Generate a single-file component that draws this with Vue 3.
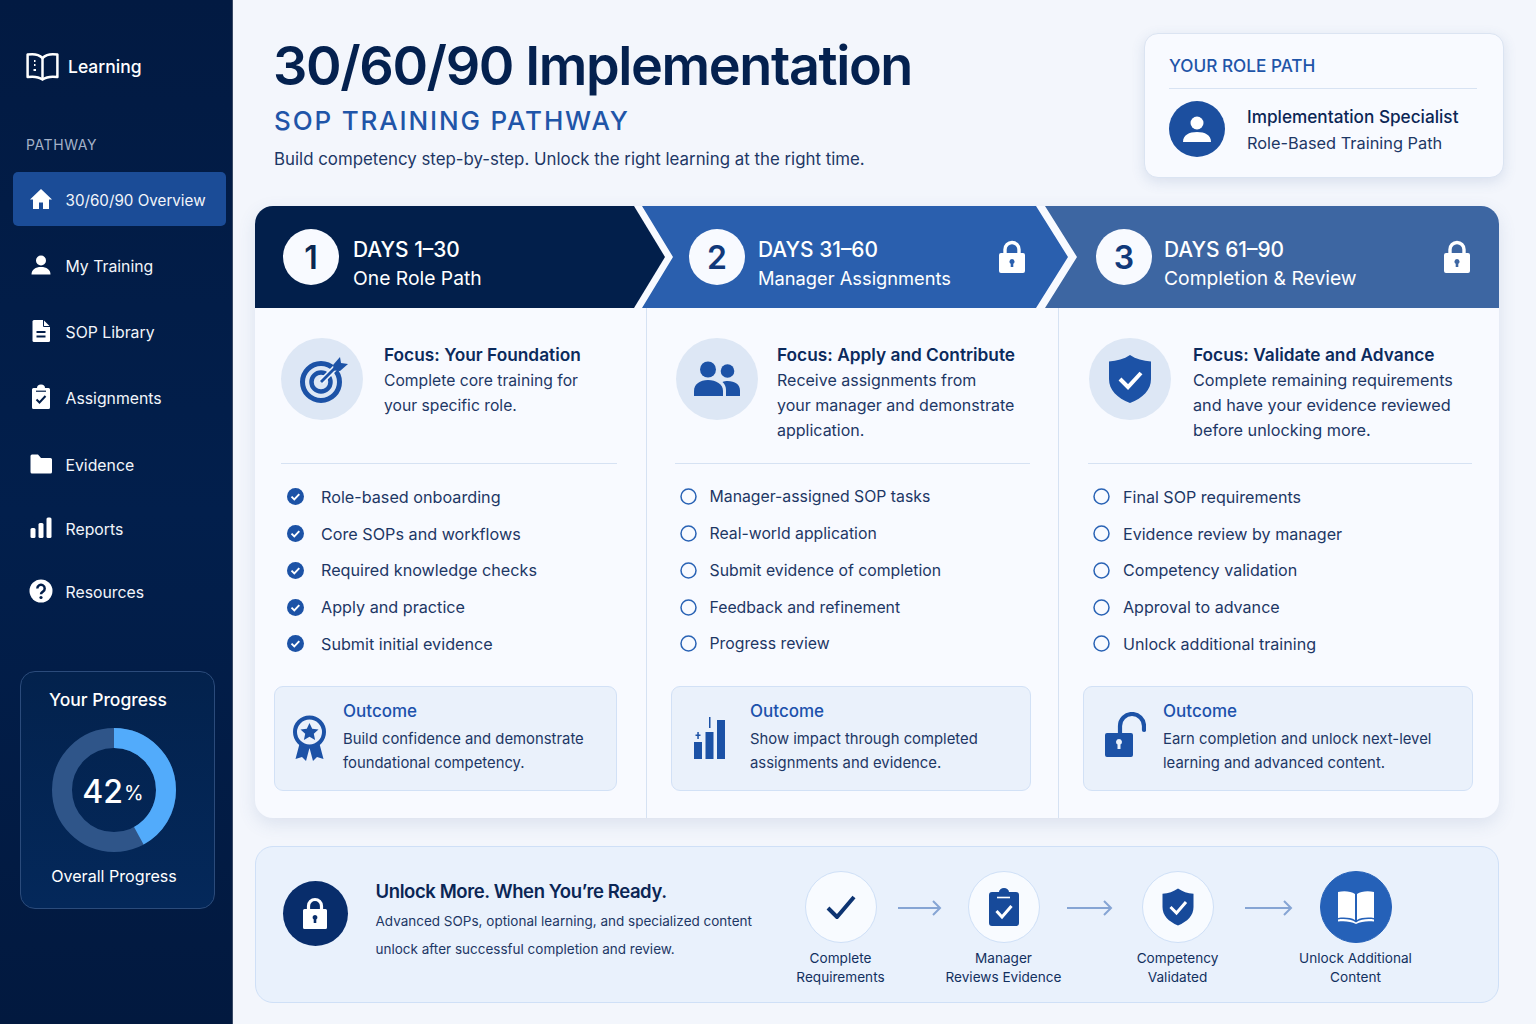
<template>
  <div class="page">
    <aside class="sidebar">
      <div class="brand">
        <svg width="33" height="29" viewBox="0 0 33 29" fill="none" stroke="#fff" stroke-width="2.5" stroke-linejoin="round">
          <path d="M16.500 6C13 2.600 7 1.600 1.600 2.600V25c5.400-.8 11.400 0 14.900 2.600C20 25 26 24.200 31.400 25V2.600C26 1.600 20 2.600 16.500 6Z" />
          <path d="M16.500 6v21" />
          <path d="M8 9h1.500M8 13h1.500M7.500 18h2.500" stroke-width="1.800" />
        </svg>
        <span>Learning</span>
      </div>
      <div class="nav-label">PATHWAY</div>
      <nav class="nav">
        <a class="nav-item active">
          <span class="nav-icon">
            <svg width="24" height="24" viewBox="0 0 24 24" fill="#fff"><path d="M12 2 1 12.500h3V22h6v-6.500h4V22h6v-9.500h3L12 2Z" /></svg>
          </span>
          30/60/90 Overview
        </a>
        <a class="nav-item">
          <span class="nav-icon">
            <svg width="24" height="24" viewBox="0 0 24 24" fill="#fff"><circle cx="12" cy="7.500" r="5" /><path d="M2.500 21.500c0-5 4-7.500 9.500-7.500s9.500 2.500 9.500 7.500Z" /></svg>
          </span>
          My Training
        </a>
        <a class="nav-item">
          <span class="nav-icon">
            <svg width="24" height="24" viewBox="0 0 24 24" fill="#fff"><path d="M3.500 2.500A1.500 1.500 0 0 1 5 1h9.500l6.500 6.500v14a1.500 1.500 0 0 1-1.500 1.500H5a1.500 1.500 0 0 1-1.500-1.500Z" /><path d="M7.500 13h9M7.500 17.500h9" stroke="#031e49" stroke-width="1.800" /><path d="M14.500 1v6.500H21" fill="none" stroke="#031e49" stroke-width="1" /></svg>
          </span>
          SOP Library
        </a>
        <a class="nav-item">
          <span class="nav-icon">
            <svg width="24" height="26" viewBox="0 0 24 26" fill="#fff"><path d="M3 5.500A1.500 1.500 0 0 1 4.500 4H8a4 3.500 0 0 1 8 0h3.500A1.500 1.500 0 0 1 21 5.500v18a1.500 1.500 0 0 1-1.500 1.500h-15A1.500 1.500 0 0 1 3 23.500Z" /><path d="M7 7.200h10" stroke="#031e49" stroke-width="1.200" /><path d="m7.500 15.500 3 3 6-6.500" fill="none" stroke="#031e49" stroke-width="2" /></svg>
          </span>
          Assignments
        </a>
        <a class="nav-item">
          <span class="nav-icon">
            <svg width="24" height="24" viewBox="0 0 24 24" fill="#fff"><path d="M1.500 4A1.500 1.500 0 0 1 3 2.500h6l3 3.500h9.500A1.500 1.500 0 0 1 23 7.500V20a1.500 1.500 0 0 1-1.500 1.500H3A1.500 1.500 0 0 1 1.500 20Z" /></svg>
          </span>
          Evidence
        </a>
        <a class="nav-item">
          <span class="nav-icon">
            <svg width="24" height="24" viewBox="0 0 24 24" fill="#fff"><rect x="1.500" y="12" width="5" height="10" rx="1.500" /><rect x="9.500" y="7" width="5" height="15" rx="1.500" /><rect x="17.500" y="1.500" width="5" height="20.500" rx="1.500" /></svg>
          </span>
          Reports
        </a>
        <a class="nav-item">
          <span class="nav-icon">
            <svg width="24" height="24" viewBox="0 0 24 24"><circle cx="12" cy="12" r="11.500" fill="#fff" /><path d="M8.300 9.400a3.700 3.700 0 1 1 5.600 3.200c-1.300.8-1.900 1.300-1.900 2.700" fill="none" stroke="#031e49" stroke-width="2.500" /><circle cx="12" cy="18.500" r="1.600" fill="#031e49" /></svg>
          </span>
          Resources
        </a>
      </nav>
      <section class="progress">
        <h3>Your Progress</h3>
        <div class="ring">
          <svg width="124" height="124" viewBox="0 0 124 124">
            <circle cx="62" cy="62" r="52" fill="none" stroke="#2f5589" stroke-width="20" />
            <circle cx="62" cy="62" r="52" fill="none" stroke="#52abfb" stroke-width="20" :stroke-dasharray="ringDash" transform="rotate(-90 62 62)" />
          </svg>
          <div class="ring-value">{{ progress }}<small>%</small></div>
        </div>
        <p>Overall Progress</p>
      </section>
    </aside>

    <main class="content">
      <header class="top">
        <div class="heading">
          <h1>30/60/90 Implementation</h1>
          <h2>SOP TRAINING PATHWAY</h2>
          <p>Build competency step-by-step. Unlock the right learning at the right time.</p>
        </div>
        <div class="role-card">
          <h4>YOUR ROLE PATH</h4>
          <div class="role-row">
            <div class="avatar">
              <svg width="32" height="32" viewBox="0 0 32 32" fill="#fff"><circle cx="16" cy="10" r="6.500" /><path d="M2 29c0-7 6-10 14-10s14 3 14 10Z" /></svg>
            </div>
            <div>
              <div class="role-name">Implementation Specialist</div>
              <div class="role-sub">Role-Based Training Path</div>
            </div>
          </div>
        </div>
      </header>

      <section class="board">
        <div class="stages">
          <div v-for="s in stages" :key="s.num" class="stage" :class="'stage-' + s.num">
            <div class="stage-num">{{ s.num }}</div>
            <div class="stage-text">
              <div class="stage-days">{{ s.days }}</div>
              <div class="stage-name">{{ s.name }}</div>
            </div>
            <svg v-if="s.locked" class="stage-lock" width="28" height="35" viewBox="0 0 28 35">
              <path d="M7 15V9.500a7 7 0 0 1 14 0V15" fill="none" stroke="#fff" stroke-width="3.400" />
              <path fill="#fff" fill-rule="evenodd" d="M3 13h22a2 2 0 0 1 2 2v16a2 2 0 0 1-2 2H3a2 2 0 0 1-2-2V15a2 2 0 0 1 2-2Zm11 6a2.600 2.600 0 0 0-1.300 4.800V27h2.600v-3.200A2.600 2.600 0 0 0 14 19Z" />
            </svg>
          </div>
        </div>

        <div class="cols">
          <div v-for="c in columns" :key="c.id" class="col" :class="'col-' + c.id">
            <div class="focus">
              <div class="focus-icon">
                <svg v-if="c.id === 1" width="52" height="52" viewBox="-2 0 52 52" fill="none">
                  <circle cx="23" cy="29" r="18.500" stroke="#1c52a6" stroke-width="5" />
                  <circle cx="23" cy="29" r="9.500" stroke="#1c52a6" stroke-width="4.500" />
                  <path d="m23 29 16-16" stroke="#f0f5fc" stroke-width="6" />
                  <path d="m23 29 17-17" stroke="#1c52a6" stroke-width="2.800" />
                  <path d="m35 12 7-8 1 6 7 1-8 7-6-.500Z" fill="#1c52a6" />
                </svg>
                <svg v-else-if="c.id === 2" width="46" height="36" viewBox="0 0 46 36" fill="#1c52a6">
                  <circle cx="14" cy="8.500" r="8" />
                  <circle cx="33.500" cy="10" r="6.800" />
                  <path d="M0 35v-5c0-7 6-11 14-11s15 4 15 11v5Z" />
                  <path d="M32 35v-6c0-3-1-6-3.500-8 1.500-.7 3.500-1 5-1C41 20 46 23.500 46 29.500V35Z" />
                </svg>
                <svg v-else width="44" height="50" viewBox="0 0 44 50">
                  <path d="M22 1c6 4 13 6 21 6.500V25c0 11-8 19-21 24C9 44 1 36 1 25V7.500C9 7 16 5 22 1Z" fill="#1c52a6" />
                  <path d="m12 25 8 8 13-14" fill="none" stroke="#fff" stroke-width="4" />
                </svg>
              </div>
              <div class="focus-text">
                <h3>{{ c.focus }}</h3>
                <p v-for="line in c.lines" :key="line">{{ line }}</p>
              </div>
            </div>
            <ul class="checks">
              <li v-for="item in c.items" :key="item">
                <svg v-if="c.id === 1" width="17" height="17" viewBox="0 0 17 17">
                  <circle cx="8.500" cy="8.500" r="8.500" fill="#1c52a6" />
                  <path d="m4.500 8.700 2.800 2.800 5-5.300" fill="none" stroke="#fff" stroke-width="1.900" />
                </svg>
                <svg v-else width="17" height="17" viewBox="0 0 17 17">
                  <circle cx="8.500" cy="8.500" r="7.500" fill="none" stroke="#2a63b5" stroke-width="1.500" />
                </svg>
                <span>{{ item }}</span>
              </li>
            </ul>
            <div class="outcome">
              <div class="outcome-icon">
                <svg v-if="c.id === 1" width="33" height="46" viewBox="0 0 33 46">
                  <path d="M7 27 2.500 44l6.500-2 4 4 4-15Z" fill="#1c52a6" />
                  <path d="M26 27l4.500 17-6.500-2-4 4-4-15Z" fill="#1c52a6" />
                  <circle cx="16.500" cy="17" r="14.500" fill="#eaf1fb" stroke="#1c52a6" stroke-width="4" />
                  <path d="m16.500 8 2.700 5.800 6.300.7-4.700 4.300 1.300 6.200-5.600-3.200-5.600 3.200 1.300-6.200-4.700-4.300 6.300-.7Z" fill="#1c52a6" />
                </svg>
                <svg v-else-if="c.id === 2" width="32" height="42" viewBox="0 0 32 42" fill="#1c52a6">
                  <rect x="0" y="25" width="8" height="17" />
                  <rect x="11.500" y="15" width="8" height="27" />
                  <rect x="23" y="3" width="8" height="39" />
                  <path d="M15 0h1.500v11H15ZM3.300 15h1.500v7H3.300ZM1.500 17.500h5V19h-5Z" />
                </svg>
                <svg v-else class="lock-open" width="41" height="46" viewBox="0 0 41 46">
                  <path d="M15 22V14a12 12 0 0 1 24 0v4" fill="none" stroke="#1c52a6" stroke-width="4.200" stroke-linecap="round" />
                  <path fill="#1c52a6" fill-rule="evenodd" d="M2 21h24a2 2 0 0 1 2 2v20a2 2 0 0 1-2 2H2a2 2 0 0 1-2-2V23a2 2 0 0 1 2-2Zm12 6a3 3 0 0 0-1.500 5.600V37h3v-4.400A3 3 0 0 0 14 27Z" />
                </svg>
              </div>
              <div class="outcome-text">
                <h4>Outcome</h4>
                <p v-for="line in c.outcome" :key="line">{{ line }}</p>
              </div>
            </div>
          </div>
        </div>
      </section>

      <section class="unlock">
        <div class="unlock-lock">
          <svg width="26" height="33" viewBox="0 0 26 33">
            <path d="M6.500 14V9a6.500 6.500 0 0 1 13 0v5" fill="none" stroke="#fff" stroke-width="3.200" />
            <path fill="#fff" fill-rule="evenodd" d="M2.500 12h21A1.500 1.500 0 0 1 25 13.500v17a1.500 1.500 0 0 1-1.500 1.500h-21A1.500 1.500 0 0 1 1 30.500v-17A1.500 1.500 0 0 1 2.500 12ZM13 18a2.500 2.500 0 0 0-1.300 4.600V26h2.600v-3.400A2.500 2.500 0 0 0 13 18Z" />
          </svg>
        </div>
        <div class="unlock-text">
          <h3>Unlock More. When You’re Ready.</h3>
          <p>Advanced SOPs, optional learning, and specialized content</p>
          <p>unlock after successful completion and review.</p>
        </div>
        <div class="flow">
          <div class="flow-step step-a">
            <div class="flow-circle">
              <svg width="30" height="24" viewBox="0 0 30 24" fill="none"><path d="m2 13 9 9L28 2" stroke="#0d3472" stroke-width="4" /></svg>
            </div>
            <div class="flow-label">Complete<br />Requirements</div>
          </div>
          <svg class="arrow arrow-a" width="44" height="16" viewBox="0 0 44 16" fill="none"><path d="M0 8h42M35 1l7 7-7 7" stroke="#86a5d4" stroke-width="2" /></svg>
          <div class="flow-step step-b">
            <div class="flow-circle">
              <svg width="30" height="38" viewBox="0 0 30 38">
                <path d="M3 4h7a5 4 0 0 1 10 0h7a3 3 0 0 1 3 3v28a3 3 0 0 1-3 3H3a3 3 0 0 1-3-3V7a3 3 0 0 1 3-3Z" fill="#174a9a" />
                <path d="M8 9.500h13" stroke="#fff" stroke-width="1.600" />
                <path d="m7.500 23 5.500 6 9.500-11" fill="none" stroke="#fff" stroke-width="3" />
              </svg>
            </div>
            <div class="flow-label">Manager<br />Reviews Evidence</div>
          </div>
          <svg class="arrow arrow-b" width="46" height="16" viewBox="0 0 46 16" fill="none"><path d="M0 8h44M37 1l7 7-7 7" stroke="#86a5d4" stroke-width="2" /></svg>
          <div class="flow-step step-c">
            <div class="flow-circle">
              <svg width="32" height="38" viewBox="0 0 32 38">
                <path d="M16 .500c4.500 3.200 9.500 4.800 15.500 5.200V19c0 8.500-6 14.500-15.500 18.500C6.500 33.500.5 27.500.5 19V5.700C6.500 5.300 11.500 3.700 16 .500Z" fill="#174a9a" />
                <path d="m8.500 19 6 6 9.500-11" fill="none" stroke="#fff" stroke-width="3" />
              </svg>
            </div>
            <div class="flow-label">Competency<br />Validated</div>
          </div>
          <svg class="arrow arrow-c" width="48" height="16" viewBox="0 0 48 16" fill="none"><path d="M0 8h46M39 1l7 7-7 7" stroke="#86a5d4" stroke-width="2" /></svg>
          <div class="flow-step step-d">
            <div class="flow-circle filled">
              <svg width="38" height="34" viewBox="0 0 38 34" fill="#fff">
                <path d="M1 2c6-1.500 13-.8 17 2v26c-4-2.500-11-3-17-2Z" />
                <path d="M37 2c-6-1.500-13-.8-17 2v26c4-2.500 11-3 17-2Z" />
                <path d="M1 29.500c6-1 13-.5 18 3 5-3.500 12-4 18-3v2c-6-.8-13-.3-18 2.500-5-2.800-12-3.300-18-2.500Z" />
              </svg>
            </div>
            <div class="flow-label">Unlock Additional<br />Content</div>
          </div>
        </div>
      </section>
    </main>
  </div>
</template>

<script setup>
import { computed, ref } from 'vue';

const progress = ref(42);
const ringDash = computed(() => {
  const len = 2 * Math.PI * 52;
  return `${(len * progress.value) / 100} ${len}`;
});

const stages = [
  { num: 1, days: 'DAYS 1–30', name: 'One Role Path', locked: false },
  { num: 2, days: 'DAYS 31–60', name: 'Manager Assignments', locked: true },
  { num: 3, days: 'DAYS 61–90', name: 'Completion & Review', locked: true },
];

const columns = [
  {
    id: 1,
    focus: 'Focus: Your Foundation',
    lines: ['Complete core training for', 'your specific role.'],
    items: ['Role-based onboarding', 'Core SOPs and workflows', 'Required knowledge checks', 'Apply and practice', 'Submit initial evidence'],
    outcome: ['Build confidence and demonstrate', 'foundational competency.'],
  },
  {
    id: 2,
    focus: 'Focus: Apply and Contribute',
    lines: ['Receive assignments from', 'your manager and demonstrate', 'application.'],
    items: ['Manager-assigned SOP tasks', 'Real-world application', 'Submit evidence of completion', 'Feedback and refinement', 'Progress review'],
    outcome: ['Show impact through completed', 'assignments and evidence.'],
  },
  {
    id: 3,
    focus: 'Focus: Validate and Advance',
    lines: ['Complete remaining requirements', 'and have your evidence reviewed', 'before unlocking more.'],
    items: ['Final SOP requirements', 'Evidence review by manager', 'Competency validation', 'Approval to advance', 'Unlock additional training'],
    outcome: ['Earn completion and unlock next-level', 'learning and advanced content.'],
  },
];
</script>

<style>
body {
  margin: 0;
  background: #f3f6fc;
}
</style>

<style scoped>
* {
  box-sizing: border-box;
}
h1, h2, h3, h4, p, ul {
  margin: 0;
  padding: 0;
}
.page {
  display: flex;
  width: 1536px;
  height: 1024px;
  overflow: hidden;
  font-family: Inter, "Liberation Sans", sans-serif;
  color: #1d3765;
  background: #f3f6fc;
}

/* sidebar */
.sidebar {
  flex: none;
  width: 233px;
  padding: 52px 6px 0 13px;
  background: linear-gradient(180deg, #021a42 0%, #021f4c 50%, #02193f 100%);
  border-right: 1px solid #3a4a66;
  color: #fff;
}
.brand {
  display: flex;
  align-items: center;
  gap: 9px;
  margin-left: 13px;
  font-size: 17.500px;
  font-weight: 500;
  height: 29px;
}
.nav-label {
  margin: 55px 0 0 13px;
  font-size: 14px;
  line-height: 18px;
  letter-spacing: 0.600px;
  color: #a4b2c8;
}
.nav {
  margin-top: 18px;
}
.nav-item {
  display: flex;
  align-items: center;
  height: 54px;
  margin-top: 12px;
  padding: 2px 0 0 16px;
  border-radius: 5px;
  font-size: 15.800px;
  color: #f2f5fa;
}
.nav-item:first-child {
  margin-top: 0;
}
.nav-item:nth-child(5) {
  margin-top: 13px;
}
.nav-item:nth-child(6) {
  margin-top: 10px;
}
.nav-item:nth-child(7) {
  margin-top: 9px;
}
.nav-item.active {
  background: #1b4c97;
  font-size: 15.200px;
}
.nav-icon {
  display: flex;
  justify-content: center;
  width: 24px;
  margin: -2px 12.500px 0 0;
}
.progress {
  width: 195px;
  height: 238px;
  margin: 53px 0 0 7px;
  padding: 17px 0 0;
  border: 1px solid #2b4b7b;
  border-radius: 15px;
  background: linear-gradient(180deg, #03224d, #04285a);
}
.progress h3 {
  margin-left: 28px;
  font-size: 17.500px;
  line-height: 22px;
  font-weight: 500;
}
.ring {
  position: relative;
  width: 124px;
  height: 124px;
  margin: 17px 0 0 31px;
}
.ring svg {
  display: block;
}
.ring-value {
  position: absolute;
  inset: 0;
  display: flex;
  align-items: center;
  justify-content: center;
  font-size: 32px;
  font-weight: 500;
  padding: 2px 2px 0 0;
}
.ring-value small {
  margin: 4px 0 0 1px;
  font-size: 20px;
  font-weight: 400;
}
.progress p {
  margin-top: 14px;
  padding-right: 7px;
  text-align: center;
  font-size: 16.100px;
  line-height: 20px;
}

/* main */
.content {
  flex: 1;
  min-width: 0;
  padding: 33px 37px 0 22px;
}
.top {
  display: flex;
  justify-content: space-between;
  height: 173px;
}
.heading {
  padding-left: 19px;
}
.heading h1 {
  margin-left: -1px;
  font-size: 54px;
  line-height: 66px;
  font-weight: 600;
  letter-spacing: -1.400px;
  color: #04214f;
  white-space: nowrap;
}
.heading h2 {
  margin-top: 7px;
  font-size: 26px;
  line-height: 30px;
  font-weight: 500;
  letter-spacing: 1.850px;
  color: #1f55a8;
}
.heading p {
  margin-top: 11px;
  font-size: 16.850px;
  line-height: 24px;
}
.role-card {
  width: 360px;
  height: 145px;
  margin-right: -5px;
  padding: 22px 26px 0 24px;
  background: #f8faff;
  border: 1px solid #dbe4f2;
  border-radius: 14px;
  box-shadow: 0 4px 14px rgba(60, 90, 150, 0.14);
}
.role-card h4 {
  font-size: 17.200px;
  line-height: 20px;
  font-weight: 500;
  color: #1f55a8;
  padding-bottom: 12px;
  border-bottom: 1.500px solid #d8e3f3;
}
.role-row {
  display: flex;
  align-items: center;
  gap: 22px;
  margin-top: 12px;
}
.avatar {
  display: flex;
  align-items: center;
  justify-content: center;
  width: 56px;
  height: 56px;
  border-radius: 50%;
  background: #1c4f9f;
}
.role-name {
  margin-top: 2px;
  font-size: 17.200px;
  line-height: 26px;
  font-weight: 500;
  color: #0b2655;
}
.role-sub {
  font-size: 16.350px;
  line-height: 26px;
}

/* board */
.board {
  height: 612px;
  background: #f8faff;
  border-radius: 18px;
  box-shadow: 0 6px 18px rgba(60, 90, 150, 0.13);
  overflow: hidden;
}
.stages {
  display: flex;
  height: 102px;
}
.stage {
  display: flex;
  align-items: center;
  flex: none;
  color: #fff;
}
.stage-1 {
  width: 410px;
  padding-left: 28px;
  background: #021f4b;
  clip-path: polygon(0 0, 379px 0, 100% 50%, 379px 100%, 0 100%);
}
.stage-2 {
  width: 426px;
  margin-left: -23px;
  padding-left: 47px;
  background: #2a5fae;
  clip-path: polygon(0 0, 394px 0, 100% 50%, 394px 100%, 0 100%, 31px 50%);
}
.stage-3 {
  width: 454px;
  margin-left: -23px;
  padding-left: 51px;
  background: #3d66a2;
  clip-path: polygon(0 0, 100% 0, 100% 100%, 0 100%, 32px 50%);
}
.stage-num {
  display: flex;
  align-items: center;
  justify-content: center;
  flex: none;
  width: 56px;
  height: 56px;
  margin-right: 14px;
  border-radius: 50%;
  background: #f8faff;
  font-size: 32px;
  font-weight: 600;
  color: #11397a;
}
.stage-1 .stage-num {
  color: #0a2651;
}
.stage-2 .stage-num {
  margin-right: 13px;
}
.stage-3 .stage-num {
  margin-right: 12px;
}
.stage-days {
  font-size: 20.900px;
  line-height: 28px;
  font-weight: 500;
}
.stage-name {
  font-size: 19.300px;
  line-height: 28px;
}
.stage-2 .stage-name {
  font-size: 18.300px;
}
.stage-text {
  flex: 1;
  margin-top: 14px;
}
.stage-2 .stage-lock {
  margin-right: 42px;
}
.stage-3 .stage-lock {
  margin-right: 28px;
}
.cols {
  display: grid;
  grid-template-columns: 392px 412px 1fr;
  height: 510px;
}
.col {
  padding: 30px var(--pr) 0 var(--pl);
  border-right: 1.500px solid #d6e2f3;
}
.col:last-child {
  border-right: 0;
}
.col-1 {
  --pl: 19px;
  --pr: 29px;
  --focus: 7px;
  --rule: 7px;
  --rule-r: 0px;
  --list: 13px;
  --ol: 18px;
  --ow: 50px;
  --fg: 21px;
  --tg: 17px;
  --fs: 15.700px;
  --cs: 16.200px;
}
.col-2 {
  --pl: 24px;
  --pr: 27px;
  --focus: 5px;
  --rule: 4px;
  --rule-r: 1px;
  --list: 9px;
  --ol: 22px;
  --ow: 56px;
  --fg: 19px;
  --tg: 12.500px;
  --fs: 16px;
  --cs: 15.800px;
}
.col-3 {
  --pl: 24px;
  --pr: 26px;
  --focus: 6px;
  --rule: 5px;
  --rule-r: 1px;
  --list: 10px;
  --ol: 21px;
  --ow: 58px;
  --fg: 22px;
  --tg: 13px;
  --fs: 16.250px;
  --cs: 16.100px;
}
.focus {
  display: flex;
  gap: var(--fg);
  height: 126px;
  margin: 0 var(--rule-r) 0 var(--rule);
  padding-left: calc(var(--focus) - var(--rule));
  border-bottom: 1.500px solid #d6e2f3;
}
.focus-icon {
  display: flex;
  align-items: center;
  justify-content: center;
  flex: none;
  width: 82px;
  height: 82px;
  border-radius: 50%;
  background: #dde7f5;
}
.focus-text {
  padding-top: 4px;
  white-space: nowrap;
}
.focus-text h3 {
  font-size: 17.300px;
  line-height: 26px;
  font-weight: 600;
  color: #0b2a5c;
}
.focus-text p {
  font-size: var(--fs);
  line-height: 25px;
}
.checks {
  margin: 14.500px 0 0 var(--list);
  list-style: none;
}
.checks li {
  display: flex;
  align-items: center;
  gap: var(--tg);
  height: 36.750px;
  font-size: var(--cs);
}
.checks svg {
  flex: none;
}
.outcome {
  display: flex;
  align-items: center;
  height: 105px;
  margin-top: 23.500px;
  padding-left: var(--ol);
  background: #eaf1fb;
  border: 1.500px solid #d2e1f6;
  border-radius: 9px;
}
.outcome-icon {
  flex: none;
  width: var(--ow);
}
.outcome-icon svg {
  display: block;
}
.outcome-icon .lock-open {
  margin-top: -7px;
}
.outcome h4 {
  margin: -2px 0 4px;
  font-size: 17px;
  line-height: 24px;
  font-weight: 500;
  color: #1c52ac;
}
.outcome p {
  font-size: 14.850px;
  line-height: 24px;
  white-space: nowrap;
}

/* unlock */
.unlock {
  position: relative;
  display: flex;
  height: 157px;
  margin-top: 28px;
  padding: 34px 0 0 26.500px;
  background: #e9f1fc;
  border: 1.500px solid #cfe0f7;
  border-radius: 18px;
}
.unlock-lock {
  display: flex;
  align-items: center;
  justify-content: center;
  flex: none;
  width: 65px;
  height: 65px;
  border-radius: 50%;
  background: #082d6b;
}
.unlock-text {
  width: 415px;
  margin-left: 28px;
}
.unlock-text h3 {
  margin-top: -2px;
  margin-bottom: 4px;
  font-size: 18.500px;
  line-height: 24px;
  font-weight: 600;
  letter-spacing: -0.400px;
  color: #0b2655;
  white-space: nowrap;
}
.unlock-text p {
  font-size: 13.500px;
  line-height: 28px;
  white-space: nowrap;
}
.flow {
  display: flex;
  align-items: flex-start;
  margin-top: -10px;
}
.flow-step {
  flex: none;
  display: flex;
  flex-direction: column;
  align-items: center;
}
.step-a {
  width: 100px;
}
.step-b {
  width: 120px;
}
.step-c {
  width: 100px;
}
.step-d {
  width: 120px;
}
.flow-circle {
  display: flex;
  align-items: center;
  justify-content: center;
  width: 72px;
  height: 72px;
  border-radius: 50%;
  background: #f8fbff;
  border: 1.500px solid #cfe0f7;
}
.flow-circle.filled {
  background: #2561b8;
  border-color: #2561b8;
}
.flow-label {
  margin-top: 6px;
  font-size: 13.600px;
  line-height: 19px;
  text-align: center;
  white-space: nowrap;
  color: #12305f;
}
.arrow {
  flex: none;
  margin-top: 29px;
}
.arrow-a {
  margin-left: 7px;
  margin-right: 2px;
}
.arrow-b {
  margin-left: 3px;
  margin-right: 15px;
}
.arrow-c {
  margin-left: 17px;
  margin-right: 3px;
}
</style>
